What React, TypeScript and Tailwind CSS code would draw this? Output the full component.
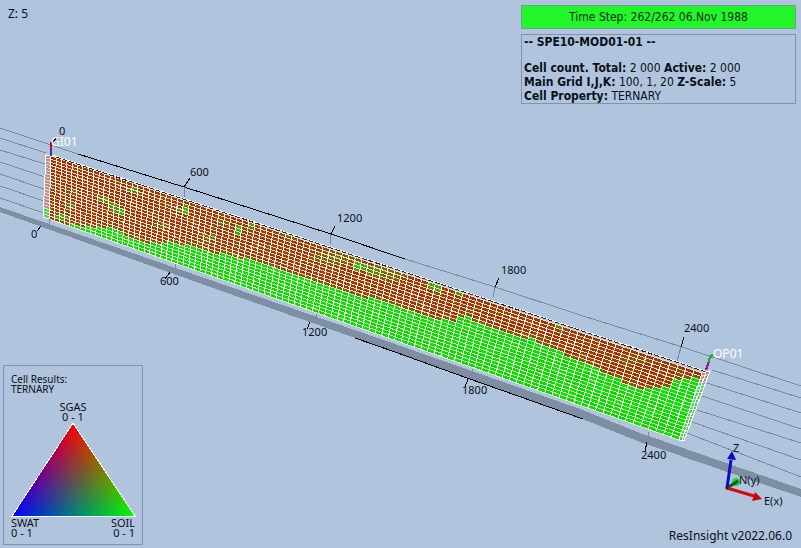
type Point = [number, number];

const COLUMNS = 100;
const ROWS = 20;

const TOP_LEFT: Point = [51, 156];
const TOP_RIGHT: Point = [702, 373];
const BOTTOM_LEFT: Point = [49, 219];
const BOTTOM_RIGHT: Point = [679, 440];

// Height on screen where gas cells give way to oil cells.
const CONTACT: Point[] = [
  [44, 224], [72, 225], [80, 226], [93, 227], [110, 228], [125, 234], [150, 243],
  [160, 244], [170, 241], [180, 244], [200, 248], [220, 254], [235, 256], [250, 260],
  [280, 268], [300, 275], [315, 280], [340, 288], [360, 295], [380, 301], [400, 307],
  [420, 314], [440, 320], [455, 320], [465, 316], [485, 324], [490, 328], [500, 331],
  [515, 334], [535, 340], [555, 348], [570, 357], [590, 363], [600, 371], [620, 380],
  [640, 388], [655, 389], [668, 387], [680, 376], [692, 378], [710, 382],
];

// Centre, reach along x and y, and strength of the oil-rich pockets above the contact.
const POCKETS: [number, number, number, number, number][] = [
  [60, 217, 9, 3, 1], [72, 206, 6, 3, 0.5], [73, 191, 5, 3, 0.5], [104, 199, 6, 3, 0.8],
  [114, 207, 6, 4, 0.8], [121, 212, 6, 4, 1], [134, 190, 5, 3, 0.8], [162, 226, 8, 3, 0.5],
  [185, 187, 5, 4, 0.9], [185, 210, 6, 5, 0.9], [212, 236, 6, 3, 0.6], [223, 222, 5, 3, 0.5],
  [239, 230, 5, 4, 1], [253, 225, 5, 3, 0.8], [290, 236, 9, 5, 0.4], [335, 258, 24, 8, 0.42],
  [360, 266, 6, 5, 1.1], [374, 271, 6, 5, 0.8], [388, 272, 18, 9, 0.45], [436, 286, 6, 6, 1],
  [458, 291, 6, 5, 1], [562, 324, 6, 5, 0.8], [632, 360, 12, 6, 0.3], [205, 240, 14, 6, 0.25],
];

function along(t: number) {
  return (0.81 * t) / (1 - 0.19 * t);
}

function mesh(column: number, row: number): Point {
  const s = along(column / COLUMNS);
  const v = row / ROWS;
  const topX = TOP_LEFT[0] + (TOP_RIGHT[0] - TOP_LEFT[0]) * s;
  const topY = TOP_LEFT[1] + (TOP_RIGHT[1] - TOP_LEFT[1]) * s;
  const bottomX = BOTTOM_LEFT[0] + (BOTTOM_RIGHT[0] - BOTTOM_LEFT[0]) * s;
  const bottomY = BOTTOM_LEFT[1] + (BOTTOM_RIGHT[1] - BOTTOM_LEFT[1]) * s;
  return [topX + (bottomX - topX) * v, topY + (bottomY - topY) * v];
}

function contactAt(x: number) {
  for (let i = 1; i < CONTACT.length; i++) {
    const [x1, y1] = CONTACT[i];
    if (x <= x1) {
      const [x0, y0] = CONTACT[i - 1];
      return y0 + ((y1 - y0) * (x - x0)) / (x1 - x0);
    }
  }
  return CONTACT[CONTACT.length - 1][1];
}

function noise(a: number, b: number) {
  const n = Math.sin(a * 12.9898 + b * 78.233) * 43758.5453;
  return n - Math.floor(n);
}

function cellColor(column: number, row: number) {
  const [x, y] = mesh(column + 0.5, row + 0.5);
  const depth = y - contactAt(x);
  if (depth > 0.5) {
    return `rgb(${Math.round(4 + noise(column, row) * 8)}, ${Math.round(214 + noise(row, column) * 14)}, 4)`;
  }
  let oil = noise(column, row) * 0.1 + noise(Math.floor(column / 4), row) * 0.1;
  if (depth > -3) oil += 0.18;
  for (const [px, py, rx, ry, strength] of POCKETS) {
    const d = Math.hypot((x - px) / rx, (y - py) / ry);
    if (d < 1) oil = Math.max(oil, strength * (1 - d * 0.35));
  }
  const r = Math.round(164 - oil * 125);
  const g = Math.round(42 + oil * 155);
  return `rgb(${r}, ${g}, 4)`;
}

function toPoints(points: Point[]) {
  return points.map(([x, y]) => `${x.toFixed(1)},${y.toFixed(1)}`).join(' ');
}

function toPath(points: Point[]) {
  return 'M' + points.map(([x, y]) => `${x.toFixed(1)} ${y.toFixed(1)}`).join('L');
}

const cells = Array.from({ length: COLUMNS * ROWS }, (_, i) => {
  const c = i % COLUMNS;
  const r = Math.floor(i / COLUMNS);
  return {
    points: toPoints([mesh(c, r), mesh(c + 1, r), mesh(c + 1, r + 1), mesh(c, r + 1)]),
    fill: cellColor(c, r),
  };
});

const columnLines = Array.from({ length: COLUMNS + 1 }, (_, c) => toPath([mesh(c, 0), mesh(c, ROWS)])).join('');
const rowLines = Array.from({ length: ROWS + 1 }, (_, r) => toPath([mesh(0, r), mesh(COLUMNS, r)])).join('');

const sideRows = Array.from({ length: ROWS + 1 }, (_, r) => {
  const v = r / ROWS;
  const [lx, ly] = mesh(0, r);
  const [rx, ry] = mesh(COLUMNS, r);
  return `${toPath([[46 - 3 * v, 155 + 62 * v], [lx, ly]])}${toPath([[rx, ry], [710 - 26 * v, 371 + 70 * v]])}`;
}).join('');

const gridLines =
  'M0 128L78 154M0 138L46 153M0 150L45 164M0 162L45 177M0 174L44 189M0 186L44 201M0 198L44 213' +
  'M405 259L495 287L580 315L682 347L801 386M712 370L801 398M707 383L801 413M702 396L801 429' +
  'M697 410L801 443M692 422L801 460M687 433L801 477';

const guideLines =
  'M184 187V197M331 234L330 244M495 287L493 297M681 347L677 361' +
  'M49 219V225M175 264V269M316 314V319M472 369V374M648 432V438';

const ticks =
  'M52 143L57 137M184 187L190 178M331 234L335 226M495 287L499 278M681 347L684 337' +
  'M41 226L37 231M170 272L165 279M310 322L307 329M468 379L465 387M647 442L645 451';

const axisLabels: [number, number, string][] = [
  [59, 135, '0'], [190, 176, '600'], [337, 222, '1200'], [501, 274, '1800'], [684, 332, '2400'],
  [31, 238, '0'], [160, 285, '600'], [302, 336, '1200'], [462, 394, '1800'], [641, 459, '2400'],
];

function ReservoirView() {
  return (
    <svg viewBox="0 0 801 548" preserveAspectRatio="xMidYMid slice" className="absolute inset-0 h-full w-full" role="img" aria-label="Reservoir grid">
      <g shapeRendering="crispEdges" fill="none">
        <polygon
          points="0,207 216,282 395,344 580,409 640,433 801,489 801,497 640,442 580,418 395,352 216,289 0,212"
          fill="#7e8ea3"
        />
        <path d={gridLines} stroke="#7b899d" />
        <path d="M78 154L184 187L331 234L405 259M355 338L395 352L467 378L583 419" stroke="#000" />
        <polygon points="46,155 51,156 49,219 43,217" fill="#b98f86" />
        <polygon points="44,208 49,209 49,219 43,217" fill="#5fc95a" />
        <polygon points="702,373 710,371 707,381 700,383" fill="#b98a78" />
        <polygon points="700,383 707,381 684,441 679,440" fill="#4fd055" />
        {cells.map((cell, i) => (
          <polygon key={i} points={cell.points} fill={cell.fill} />
        ))}
        <path d="M52 155L705 371" stroke="#fff" />
        <path d={rowLines} stroke="#ffecd6" strokeOpacity="0.85" />
        <path d={columnLines} stroke="#fff" strokeOpacity="0.92" />
        <path d={sideRows} stroke="#fff" strokeOpacity="0.6" />
        <path d="M51 156L46 155L43 217L49 219M702 373L710 371L684 441L679 440M706 372L682 440" stroke="#fff" />
        <path d="M56 157L706 372" stroke="#3a1d0c" strokeDasharray="5 2" />
        <path d={guideLines} stroke="#7b899d" />
        <path d={ticks} stroke="#000" />
        <path d="M51 144V156" stroke="#3a3a8c" strokeWidth="2" />
        <path d="M51 142V150" stroke="#b00a3c" strokeWidth="2" />
        <path d="M706 370L709 361" stroke="#a0128c" strokeWidth="2" />
        <path d="M708 363L713 354L710 356L708 360Z" stroke="#12b83c" fill="#12b83c" />
      </g>

      <g className="font-['Noto_Sans',sans-serif] text-[11px]" fill="#0a1018">
        {axisLabels.map(([x, y, label]) => (
          <text key={`${x}-${y}`} x={x} y={y}>{label}</text>
        ))}
      </g>
      <g className="font-['Noto_Sans',sans-serif] text-[12px]" fill="#fff">
        <text x="51" y="146">GI01</text>
        <text x="713" y="358">OP01</text>
      </g>

      <g>
        <circle cx="736" cy="482" r="4" fill="#22d43c" />
        <path d="M727 488L738 481" stroke="#0b5a1c" strokeWidth="3" />
        <path d="M727 488L731 460" stroke="#0c0cd0" strokeWidth="3" />
        <path d="M732 451L736 460L727 459Z" fill="#0a0ac0" />
        <path d="M727 488L754 496" stroke="#d80a0a" strokeWidth="3" />
        <path d="M762 499L752 501L755 492Z" fill="#c40808" />
        <circle cx="727" cy="488" r="1.5" fill="#222" />
        <g className="font-['Noto_Sans',sans-serif] text-[11px]" fill="#0a1018">
          <text x="733" y="452">Z</text>
          <text x="739" y="484">N(y)</text>
          <text x="764" y="505">E(x)</text>
        </g>
      </g>
    </svg>
  );
}

function TernaryTriangle() {
  const outline = '62,1 1,94 124,94';
  return (
    <svg viewBox="0 0 126 96" className="h-24 w-[126px]" role="img" aria-label="Ternary colours">
      <defs>
        <linearGradient id="gas" gradientUnits="userSpaceOnUse" x1="62" y1="1" x2="62" y2="94">
          <stop offset="0" stopColor="#f00" />
          <stop offset="1" stopColor="#000" />
        </linearGradient>
        <linearGradient id="water" gradientUnits="userSpaceOnUse" x1="1" y1="94" x2="86.6" y2="37.3">
          <stop offset="0" stopColor="#00f" />
          <stop offset="1" stopColor="#000" />
        </linearGradient>
        <linearGradient id="oil" gradientUnits="userSpaceOnUse" x1="124" y1="94" x2="37.9" y2="37.5">
          <stop offset="0" stopColor="#0f0" />
          <stop offset="1" stopColor="#000" />
        </linearGradient>
      </defs>
      <g className="isolate">
        <polygon points={outline} fill="url(#gas)" />
        <polygon points={outline} fill="url(#water)" className="mix-blend-screen" />
        <polygon points={outline} fill="url(#oil)" className="mix-blend-screen" />
      </g>
      <polygon points={outline} fill="none" stroke="#fff" shapeRendering="crispEdges" />
    </svg>
  );
}

function Legend() {
  return (
    <section className="flex w-[140px] flex-col border border-[#7f93b2] px-[7px] pt-2 pb-[6px] text-[11px] leading-[10px]">
      <h2 className="text-[10px] leading-[10px]">Cell Results:<br />TERNARY</h2>
      <p className="mt-2 text-center">SGAS<br />0 - 1</p>
      <TernaryTriangle />
      <div className="flex justify-between">
        <p>SWAT<br />0 - 1</p>
        <p className="text-right">SOIL<br />0 - 1</p>
      </div>
    </section>
  );
}

function InfoPanel() {
  return (
    <section className="flex w-[275px] flex-col gap-[5px] font-['DejaVu_Sans_Condensed','DejaVu_Sans',sans-serif] text-[12px] leading-[14px]">
      <p className="border border-[#6f9f8f] bg-[#22f52a] py-1 text-center text-[#08300c]">
        Time Step: 262/262 06.Nov 1988
      </p>
      <div className="border border-[#7f93b2] px-[2px]">
        <h1 className="mb-3 font-bold">-- SPE10-MOD01-01 --</h1>
        <p><b>Cell count. Total:</b> 2 000 <b>Active:</b> 2 000</p>
        <p><b>Main Grid I,J,K:</b> 100, 1, 20 <b>Z-Scale:</b> 5</p>
        <p><b>Cell Property:</b> TERNARY</p>
      </div>
    </section>
  );
}

export default function App() {
  return (
    <main className="relative flex min-h-screen flex-col justify-between overflow-hidden bg-[#b0c4de] font-['Noto_Sans',sans-serif] text-[12px] text-[#0a1018]">
      <ReservoirView />
      <header className="relative flex items-start justify-between pt-[5px] pr-[5px] pl-2">
        <p>Z: 5</p>
        <InfoPanel />
      </header>
      <footer className="relative flex items-end justify-between pr-[9px] pb-[3px] pl-[3px]">
        <Legend />
        <p>ResInsight v2022.06.0</p>
      </footer>
    </main>
  );
}
